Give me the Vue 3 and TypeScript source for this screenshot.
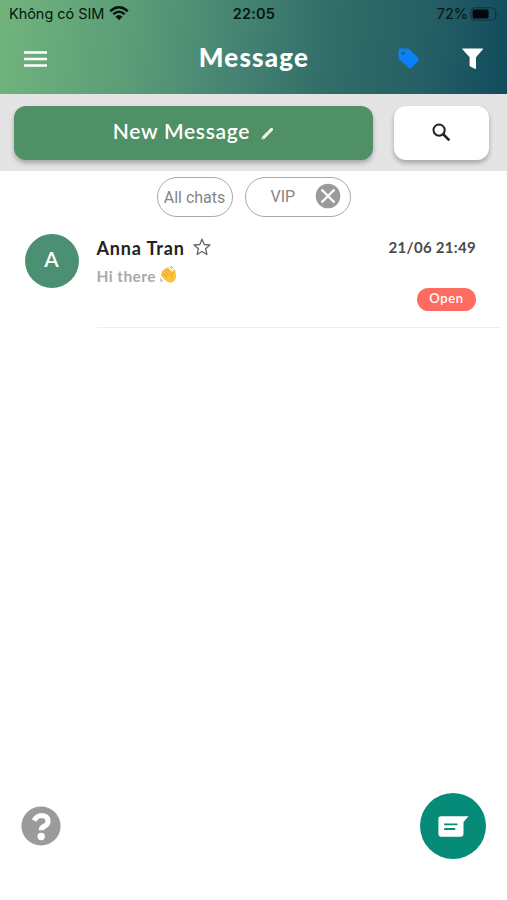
<script setup lang="ts">
interface Chat {
  id: number
  name: string
  preview: string
  time: string
  status: string
}

const filters: { label: string; removable: boolean }[] = [
  { label: 'All chats', removable: false },
  { label: 'VIP', removable: true },
]

const chats: Chat[] = [
  { id: 1, name: 'Anna Tran', preview: 'Hi there', time: '21/06 21:49', status: 'Open' },
]
</script>

<template>
  <main class="screen">
    <header class="header">
      <div class="status-bar">
        <div class="carrier">
          <span class="carrier-name">Không có SIM</span>
          <svg class="wifi" width="20" height="15" viewBox="0 0 20 15">
            <path d="M1.2 5.2Q10 -2.6 18.8 5.2M4.3 8.3Q10 3.3 15.7 8.3" fill="none" stroke="#07150f" stroke-width="2.5" />
            <path d="M6.4 10.6Q10 7.4 13.6 10.6L10 14.2Z" fill="#07150f" />
          </svg>
        </div>
        <span class="clock">22:05</span>
        <div class="battery">
          <span class="percent">72%</span>
          <svg width="29" height="14" viewBox="0 0 29 14">
            <rect x="1" y=".8" width="24.6" height="12.4" rx="3.4" fill="none" stroke="#10323f" stroke-width="1" />
            <rect x="2.6" y="2.5" width="16" height="9" rx="1.6" fill="#02080c" />
            <path d="M27 4.8Q29 7 27 9.2Z" fill="#10323f" />
          </svg>
        </div>
      </div>
      <nav class="nav">
        <button class="icon-button menu" aria-label="Menu">
          <svg width="23" height="16" viewBox="0 0 23 16">
            <path d="M0 1.6H23M0 8.1H23M0 14.4H23" stroke="#fff" stroke-width="2.5" />
          </svg>
        </button>
        <h1 class="title">Message</h1>
        <div class="nav-actions">
          <button class="icon-button" aria-label="Tags">
            <svg width="22" height="22" viewBox="0 0 22 22">
              <path fill-rule="evenodd" fill="#0a80fb" d="M.5 2.2Q.5.5 2.2.5H9.4Q10.4.5 11.1 1.2L20.4 10Q21.7 11.2 20.5 12.4L13.3 19.9Q12 21.2 10.8 20L1.2 11.2Q.5 10.5.5 9.5ZM5.2 3.4a1.8 1.8 0 1 0 0 3.6a1.8 1.8 0 1 0 0-3.6Z" />
            </svg>
          </button>
          <button class="icon-button" aria-label="Filter">
            <svg width="22" height="22" viewBox="0 0 22 22">
              <path fill="#fff" d="M1.1.4H20.3Q21.7.4 20.8 1.6L14 9.3V20Q14 21.4 12.8 20.8L8.3 18.4Q7.6 18 7.6 17.2V9.3L.6 1.6Q-.2.4 1.1.4Z" />
            </svg>
          </button>
        </div>
      </nav>
    </header>

    <section class="toolbar">
      <button class="new-message">
        <span class="new-label">New Message</span>
        <svg width="13" height="13" viewBox="0 0 13 13">
          <path d="M2.2 10.8L7.6 5.4" stroke="#eef6e9" stroke-width="3.1" />
          <path d="M8.6 4.4L10.6 2.4" stroke="#eef6e9" stroke-width="3.1" stroke-linecap="round" />
          <path d="M.7 9.8V12.3H3.2Z" fill="#eef6e9" />
        </svg>
      </button>
      <button class="search" aria-label="Search">
        <svg width="19" height="19" viewBox="0 0 19 19" fill="none" stroke="#222">
          <circle cx="7.1" cy="7.1" r="5.6" stroke-width="2" />
          <path d="M11 11L17.4 17.4" stroke-width="2.5" />
        </svg>
      </button>
    </section>

    <section class="filters">
      <div v-for="f in filters" :key="f.label" class="chip" :class="{ removable: f.removable }">
        <span>{{ f.label }}</span>
        <svg v-if="f.removable" width="26" height="26" viewBox="0 0 26 26">
          <circle cx="13" cy="13" r="12.3" fill="#9a9a9a" />
          <path d="M6.5 6.5L19.5 19.5M19.5 6.5L6.5 19.5" stroke="#fff" stroke-width="2.3" />
        </svg>
      </div>
    </section>

    <section class="chats">
      <article v-for="chat in chats" :key="chat.id" class="chat">
        <div class="avatar">{{ chat.name.charAt(0) }}</div>
        <div class="details">
          <div class="summary">
            <div class="name-row">
              <span class="name">{{ chat.name }}</span>
              <svg width="18" height="18" viewBox="0 0 18 18">
                <path d="M9 1.2L11.2 6.5L17 7L12.6 10.8L13.9 16.5L9 13.5L4.1 16.5L5.4 10.8L1 7L6.8 6.5Z" fill="none" stroke="#666" stroke-width="1.3" stroke-linejoin="round" />
              </svg>
            </div>
            <div class="preview-row">
              <span class="preview">{{ chat.preview }}</span>
              <svg width="17" height="18" viewBox="0 0 17 18" role="img" aria-label="waving hand">
                <path d="M1.2 9.8L4.8 13.8Q8.6 17.8 12.7 16Q16.3 14 15.9 9.5L15.4 4.4Q14.2 2.8 12.8 4.4L12.6 5.8L8.6 1.9Q6.9 1.1 6.6 2.6L4.9 2.5Q3.6 3 3.9 4.3L2.5 4.8Q1.6 5.6 2.2 6.7L1.5 7.4Q.4 8.6 1.2 9.8Z" fill="#fbc13f" />
                <path d="M6.6 3L10.5 7.2M4.2 4.5L8.6 8.9M2.5 6.8L7 10.8M12.7 6.4Q10.8 8.4 12 11" fill="none" stroke="#e59a2d" stroke-width=".8" stroke-linecap="round" />
                <path d="M9.5.9Q11.2 1.2 11.9 2.9M10.8.3Q12.5.7 13.2 2.3M.6 12.3Q.9 14.2 2.8 14.8M.2 13.6Q.6 15.2 2 15.7" fill="none" stroke="#9b9ba0" stroke-width=".8" />
              </svg>
            </div>
          </div>
          <div class="meta">
            <time class="time">{{ chat.time }}</time>
            <span class="badge">{{ chat.status }}</span>
          </div>
        </div>
      </article>
    </section>

    <footer class="footer">
      <button class="icon-button" aria-label="Help">
        <svg width="40" height="40" viewBox="0 0 40 40">
          <circle cx="20" cy="20" r="19.6" fill="#9b9b9b" />
          <path d="M13.2 14.6Q15.8 9.5 20.6 9.5Q27 9.8 27 15.2Q27 18.3 23.8 20Q20.3 21.5 20.3 24.3" fill="none" stroke="#fff" stroke-width="5.2" />
          <circle cx="20.2" cy="30.5" r="3.7" fill="#fff" />
        </svg>
      </button>
      <button class="compose" aria-label="Conversations">
        <svg width="31" height="21" viewBox="0 0 31 21">
          <path d="M3 .3H30.6L25.5 6V17.8Q25.5 20.7 22.6 20.7H3.2Q.4 20.7.4 17.8V3Q.4.3 3 .3Z" fill="#fff" />
          <path d="M6.2 8.4H19.4M6.2 13H17.2" stroke="#078b79" stroke-width="1.9" />
        </svg>
      </button>
    </footer>
  </main>
</template>

<style>
body {
  margin: 0;
  background: #fff;
}
</style>

<style scoped>
.screen {
  display: flex;
  flex-direction: column;
  box-sizing: border-box;
  width: 100%;
  height: 900px;
  overflow: hidden;
  background: #fff;
  font-family: Lato, "Open Sans", sans-serif;
}

button {
  display: flex;
  align-items: center;
  justify-content: center;
  margin: 0;
  padding: 0;
  border: 0;
  font: inherit;
}

svg {
  display: block;
  flex: none;
}

.icon-button {
  background: none;
}

.header {
  flex: none;
  height: 94px;
  background: linear-gradient(96deg, #71b47d 0%, #5a9c77 27%, #448272 48%, #2f6b67 67%, #265f65 83%, #114c5e 100%);
}

.status-bar {
  display: grid;
  grid-template-columns: 1fr auto 1fr;
  align-items: center;
  height: 27px;
  padding: 0 8px 0 9px;
  font-family: Inter, sans-serif;
  font-size: 14.5px;
  color: #07150f;
}

.carrier,
.battery {
  display: flex;
  align-items: center;
}

.carrier {
  gap: 5px;
}

.carrier-name {
  letter-spacing: -0.05px;
}

.wifi {
  margin-top: -1px;
}

.clock {
  font-weight: 600;
  letter-spacing: 0.2px;
}

.battery {
  justify-content: flex-end;
  gap: 2px;
}

.nav {
  display: grid;
  grid-template-columns: 1fr auto 1fr;
  align-items: center;
  height: 64px;
  padding: 0 23px 0 24px;
}

.menu {
  justify-self: start;
}

.title {
  margin: -4px 0 0;
  font-size: 26px;
  line-height: 30px;
  font-weight: 900;
  letter-spacing: 1.2px;
  color: #fff;
}

.nav-actions {
  display: flex;
  justify-content: flex-end;
  gap: 42px;
}

.toolbar {
  display: flex;
  flex: none;
  gap: 21px;
  box-sizing: border-box;
  height: 77px;
  padding: 12px 18px 11px 14px;
  background: #e4e4e4;
}

.new-message,
.search {
  border-radius: 12px;
  box-shadow: 0 3px 5px rgba(0, 0, 0, 0.28);
}

.new-message {
  flex: 1;
  gap: 11px;
  padding-bottom: 6px;
  background: #4f9066;
  color: #fff;
}

.new-message svg {
  margin-top: 6px;
}

.new-label {
  font-size: 21px;
  font-weight: 600;
  letter-spacing: 0.7px;
}

.search {
  width: 95px;
  padding-bottom: 2px;
  background: #fff;
}

.filters {
  display: flex;
  flex: none;
  justify-content: center;
  gap: 12px;
  height: 40px;
  padding-top: 6px;
}

.chip {
  display: flex;
  align-items: center;
  justify-content: center;
  box-sizing: border-box;
  width: 76px;
  height: 40px;
  border: 1.5px solid #aaa;
  border-radius: 20px;
  font-family: Roboto, sans-serif;
  font-size: 16px;
  color: #858585;
}

.chip.removable {
  justify-content: space-between;
  width: 106px;
  padding: 0 9px 2px 25px;
}

.chats {
  flex: 1;
}

.chat {
  display: flex;
  gap: 18px;
  padding: 16.5px 6px 0 24.5px;
}

.avatar {
  display: flex;
  align-items: center;
  justify-content: center;
  flex: none;
  box-sizing: border-box;
  width: 54px;
  height: 54px;
  padding-bottom: 5px;
  border-radius: 50%;
  background: #4c9074;
  font-size: 21px;
  font-weight: 600;
  color: #fff;
}

.details {
  display: flex;
  flex: 1;
  justify-content: space-between;
  box-sizing: border-box;
  height: 94px;
  padding: 0 25px 0 0;
  border-bottom: 1px solid #eee;
}

.name-row,
.preview-row {
  display: flex;
  align-items: center;
}

.name-row {
  gap: 8px;
  height: 28px;
}

.name {
  font-size: 18px;
  font-weight: 700;
  letter-spacing: 0.85px;
  color: #222;
}

.name-row svg {
  margin-top: -2px;
}

.preview-row {
  gap: 4px;
  height: 28px;
}

.preview {
  font-size: 15.5px;
  font-weight: 700;
  letter-spacing: 0.4px;
  color: #aaa;
}

.preview-row svg {
  margin-top: -1px;
}

.meta {
  display: flex;
  flex-direction: column;
  align-items: flex-end;
}

.time {
  height: 54px;
  font-size: 15px;
  line-height: 27px;
  font-weight: 700;
  letter-spacing: 0.3px;
  color: #4b4b4b;
}

.badge {
  width: 59px;
  height: 23px;
  border-radius: 12px;
  background: #fe6b60;
  font-size: 13px;
  line-height: 20px;
  font-weight: 600;
  letter-spacing: 0.6px;
  text-align: center;
  color: #fff;
}

.footer {
  display: flex;
  flex: none;
  align-items: center;
  justify-content: space-between;
  padding: 0 21px 41px;
}

.compose {
  width: 66px;
  height: 66px;
  border-radius: 50%;
  background: #078b79;
}
</style>
